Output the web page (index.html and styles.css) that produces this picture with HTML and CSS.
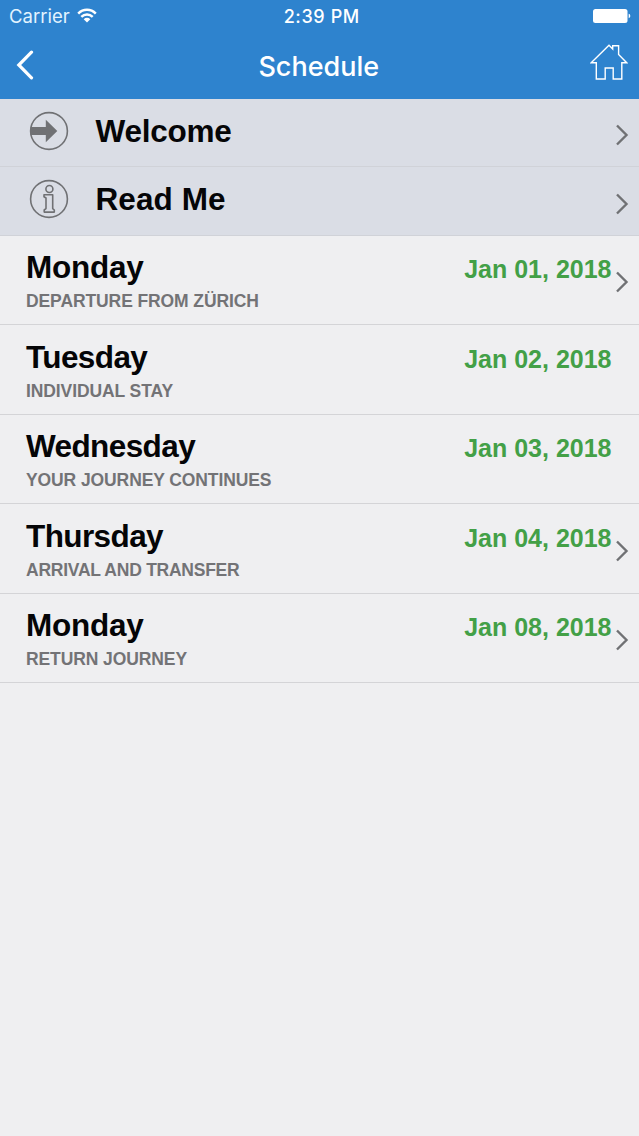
FILE: index.html
```
<!DOCTYPE html>
<html lang="en">
<head>
<meta charset="utf-8">
<title>Schedule</title>
<link rel="stylesheet" href="styles.css">
</head>
<body>
<svg class="defs" width="0" height="0" aria-hidden="true">
  <symbol id="chevron" viewBox="0 0 14 22"><path d="M2 1.5 11.5 11 2 20.5" fill="none" stroke="currentColor" stroke-width="2.4"/></symbol>
</svg>
<header class="header">
  <div class="status">
    <div class="status-left">
      <span class="carrier">Carrier</span>
      <svg class="wifi" viewBox="0 0 20 16"><g fill="none" stroke="currentColor" stroke-width="2.5"><path d="M1.2 5.6C6.2.5 13.8.5 18.8 5.6"/><path d="M4.3 8.9C7.6 5.7 12.4 5.7 15.7 8.9"/></g><path d="M6.7 11.2C8.6 9.4 11.4 9.4 13.3 11.2L10 14.5Z" fill="currentColor"/></svg>
    </div>
    <span class="time">2:39 PM</span>
    <div class="status-right"><svg class="battery" viewBox="0 0 38 14"><rect width="34.5" height="14" rx="2.5" fill="currentColor"/><path d="M35.7 4.8C37.8 5.2 37.8 8.8 35.7 9.2Z" fill="currentColor"/></svg></div>
  </div>
  <nav class="nav">
    <svg class="back" viewBox="0 0 18 30"><path d="M15.5 2.2 2.8 15 15.5 27.8" fill="none" stroke="currentColor" stroke-width="3.2" stroke-linecap="round"/></svg>
    <h1 class="title">Schedule</h1>
    <svg class="home" viewBox="0 0 38 38"><path d="M1.2 19.7 19 2.3 22.7 6V2.7H28.6V11.4L36.7 19.7H31.8V36H23.2V25H15.2V36H6.3V19.7Z" fill="none" stroke="currentColor" stroke-width="1.4"/></svg>
  </nav>
</header>
<main>
  <a class="info">
    <svg class="info-icon" viewBox="0 0 40 40"><circle cx="20" cy="20" r="18.4" fill="none" stroke="currentColor" stroke-width="1.6"/><path d="M1.7 16H16.8V8.7L28.3 20 16.8 31.3V24H1.7Z" fill="currentColor"/></svg>
    <span class="heading">Welcome</span>
    <svg class="chevron"><use href="#chevron"/></svg>
  </a>
  <a class="info">
    <svg class="info-icon" viewBox="0 0 40 40"><g fill="none" stroke="currentColor" stroke-width="1.6"><circle cx="20" cy="20" r="18.4"/><circle cx="20.4" cy="10" r="3.5"/><path d="M15 15.7H23.7V29.6L25.3 31V33.1H15.2V31L17 29.6V19L15 17.8Z" stroke-linejoin="round"/></g></svg>
    <span class="heading loose">Read Me</span>
    <svg class="chevron"><use href="#chevron"/></svg>
  </a>
  <a class="day">
    <div class="day-text"><div class="heading">Monday</div><div class="subtitle">DEPARTURE FROM ZÜRICH</div></div>
    <span class="date">Jan 01, 2018</span>
    <svg class="chevron"><use href="#chevron"/></svg>
  </a>
  <a class="day">
    <div class="day-text"><div class="heading tight">Tuesday</div><div class="subtitle">INDIVIDUAL STAY</div></div>
    <span class="date">Jan 02, 2018</span>
  </a>
  <a class="day">
    <div class="day-text"><div class="heading tight">Wednesday</div><div class="subtitle">YOUR JOURNEY CONTINUES</div></div>
    <span class="date">Jan 03, 2018</span>
  </a>
  <a class="day">
    <div class="day-text"><div class="heading tight">Thursday</div><div class="subtitle tight">ARRIVAL AND TRANSFER</div></div>
    <span class="date">Jan 04, 2018</span>
    <svg class="chevron"><use href="#chevron"/></svg>
  </a>
  <a class="day">
    <div class="day-text"><div class="heading">Monday</div><div class="subtitle">RETURN JOURNEY</div></div>
    <span class="date">Jan 08, 2018</span>
    <svg class="chevron"><use href="#chevron"/></svg>
  </a>
</main>
</body>
</html>
```
FILE: styles.css
```
* { box-sizing: border-box; }
body {
  margin: 0;
  min-height: 1136px;
  background: #efeff1;
  font-family: "Liberation Sans", Arial, sans-serif;
  color: #050507;
}
svg { display: block; flex: none; }
.defs { display: none; }

.header {
  height: 98.5px;
  background: #2e83ce;
  color: #fff;
}
.status {
  display: grid;
  grid-template-columns: 1fr auto 1fr;
  align-items: center;
  height: 32px;
  padding: 0 8.5px 0 9px;
  font-family: Inter, sans-serif;
  font-size: 18.5px;
}
.status-left { display: flex; align-items: center; gap: 7px; }
.status-right { display: flex; justify-content: flex-end; }
.carrier { color: #e3f4ff; letter-spacing: 0; }
.wifi { width: 20px; height: 16px; margin-top: -1px; }
.time { font-weight: 500; font-size: 18px; letter-spacing: 0.6px; padding-left: 4px; }
.battery { width: 38px; height: 14px; }
.nav {
  display: grid;
  grid-template-columns: 1fr auto 1fr;
  align-items: center;
  height: 66px;
  padding: 0 11.5px 0 16px;
}
.back { width: 18px; height: 30px; margin-bottom: 1px; }
.title {
  margin: 3px 6px 0 0;
  font-family: Inter, sans-serif;
  font-size: 27px;
  font-weight: 500;
  line-height: 34px;
}
.home { width: 38px; height: 38px; justify-self: end; margin-bottom: 6px; }

.info {
  display: flex;
  align-items: center;
  height: 68.5px;
  padding: 0 10px 3px 29px;
  background: #dadde5;
  border-bottom: 1px solid #d0d2d8;
}
.info-icon { width: 40px; height: 40px; color: #707174; }
.info .heading { margin-left: 26.5px; flex: 1; }
.info .chevron { margin-top: 9px; }
.heading {
  font-size: 31.5px;
  font-weight: 700;
  line-height: 36px;
  letter-spacing: -0.25px;
  white-space: nowrap;
}
.heading.tight { letter-spacing: -0.6px; }
.heading.loose { letter-spacing: 0.1px; }
.chevron { width: 14px; height: 22px; color: #707174; }

.day {
  display: flex;
  align-items: flex-start;
  height: 89.5px;
  padding: 13.5px 27.5px 0 26px;
  border-bottom: 1.5px solid #d4d4d7;
}
.day-text { flex: 1; }
.subtitle {
  margin-top: 6px;
  color: #737376;
  font-size: 17.5px;
  font-weight: 700;
  line-height: 20px;
  letter-spacing: -0.1px;
}
.subtitle.tight { letter-spacing: -0.25px; }
.date {
  margin-top: 5px;
  color: #43a047;
  font-size: 25px;
  font-weight: 700;
  line-height: 30px;
}
.day .chevron { margin: 22px -17.5px 0 3.5px; }
```
